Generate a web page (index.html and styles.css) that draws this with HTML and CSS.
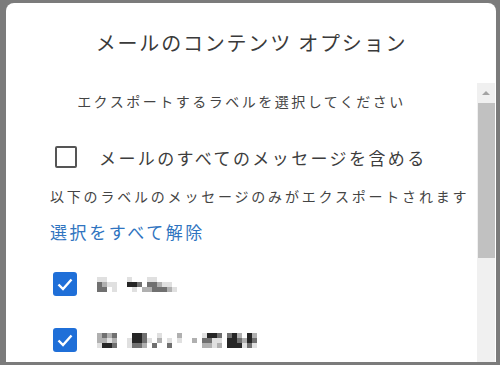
FILE: index.html
```html
<!DOCTYPE html>
<html>
  <head>
    <meta charset="utf-8">
    <link rel="stylesheet" href="styles.css">
  </head>
  <body>
    <div class="dialog">
      <header class="title">メールのコンテンツ オプション</header>
      <div class="main">
        <div class="content">
          <p class="lead">エクスポートするラベルを選択してください</p>
          <label class="option">
            <span class="box"></span>
            <span class="option-text">メールのすべてのメッセージを含める</span>
          </label>
          <p class="note">以下のラベルのメッセージのみがエクスポートされます</p>
          <a class="clear" href="#">選択をすべて解除</a>
          <div class="label-row first">
            <span class="box checked"><svg viewBox="0 0 24 24" width="24" height="24"><polyline points="5.5,12.5 10,17 18.5,7.5" fill="none" stroke="#fff" stroke-width="2.4"/></svg></span>
            <span class="mosaic"><i class="s1"></i><i class="s3"></i><i class="s3"></i><i class="s1"></i><i class="s2"></i><i class="s3"></i><i></i><i class="s1"></i><i></i><i></i><i class="s1"></i><i class="s1"></i><i></i><i></i><i></i><i></i><i></i><i></i><i class="s1"></i><i class="s4"></i><i></i><i></i><i class="s4"></i><i class="s1"></i><i></i><i class="s3"></i><i></i><i></i><i></i><i class="s2"></i><i class="s1"></i><i class="s3"></i><i class="s2"></i><i class="s1"></i><i class="s3"></i><i class="s3"></i><i></i><i class="s2"></i><i class="s3"></i><i></i><i class="s1"></i><i class="s3"></i><i></i><i class="s1"></i><i class="s2"></i><i></i><i></i><i class="s1"></i></span>
          </div>
          <div class="label-row">
            <span class="box checked"><svg viewBox="0 0 24 24" width="24" height="24"><polyline points="5.5,12.5 10,17 18.5,7.5" fill="none" stroke="#fff" stroke-width="2.4"/></svg></span>
            <span class="mosaic"><i class="s2"></i><i class="s2"></i><i class="s1"></i><i class="s3"></i><i class="s2"></i><i class="s4"></i><i class="s2"></i><i class="s1"></i><i class="s4"></i><i class="s3"></i><i class="s2"></i><i class="s3"></i><i></i><i></i><i></i><i></i><i></i><i></i><i></i><i class="s1"></i><i class="s1"></i><i class="s4"></i><i class="s4"></i><i class="s3"></i><i class="s4"></i><i class="s4"></i><i class="s3"></i><i class="s3"></i><i class="s3"></i><i class="s2"></i><i></i><i class="s1"></i><i></i><i></i><i></i><i class="s3"></i><i class="s1"></i><i class="s2"></i><i></i><i></i><i></i><i></i><i></i><i class="s1"></i><i class="s3"></i><i></i><i></i><i></i><i class="s2"></i><i class="s1"></i><i></i><i></i><i></i><i></i><i></i><i></i><i></i><i></i><i class="s2"></i><i></i><i></i><i></i><i></i><i class="s1"></i><i class="s3"></i><i class="s2"></i><i class="s4"></i><i class="s3"></i><i class="s2"></i><i class="s4"></i><i class="s1"></i><i class="s1"></i><i class="s3"></i><i class="s1"></i><i class="s2"></i><i></i><i></i><i></i><i class="s3"></i><i class="s4"></i><i class="s4"></i><i class="s4"></i><i class="s4"></i><i class="s4"></i><i class="s2"></i><i class="s3"></i><i class="s4"></i><i></i><i class="s2"></i><i class="s1"></i><i class="s4"></i><i class="s4"></i><i class="s3"></i><i class="s2"></i><i class="s3"></i><i class="s1"></i></span>
          </div>
        </div>
        <div class="scrollbar">
          <div class="arrow"></div>
          <div class="thumb"></div>
        </div>
      </div>
    </div>
  </body>
</html>
```

FILE: styles.css
```css
html {
  height: 100%;
}
body {
  margin: 0;
  height: 100%;
  padding: 3px 4px 0 6px;
  box-sizing: border-box;
  background-color: #7b7b7b;
  font-family: "Noto Sans CJK JP", sans-serif;
  color: #444;
  overflow: hidden;
}
.dialog {
  width: 490px;
  height: 359px;
  background-color: #fff;
  border-radius: 8px 8px 0 0;
  display: flex;
  flex-flow: column;
}
.title {
  height: 78px;
  flex: none;
  display: flex;
  align-items: center;
  justify-content: center;
  font-size: 20px;
  letter-spacing: 1.8px;
  color: #3a3a3a;
  padding: 0 0 2px 1px;
}
.main {
  flex: 1;
  display: flex;
  min-height: 0;
}
.content {
  flex: 1;
  padding-left: 44px;
  display: flex;
  flex-flow: column;
  align-items: flex-start;
}
.lead {
  align-self: stretch;
  margin: 8px 0 0 -44px;
  text-align: center;
  font-size: 14px;
  letter-spacing: 2.5px;
  line-height: 20px;
}
.option {
  margin-top: 32px;
  height: 28px;
  display: flex;
  align-items: center;
}
.box {
  display: inline-block;
  box-sizing: border-box;
  width: 22px;
  height: 22px;
  border: 2px solid #555;
  border-radius: 2px;
  margin-left: 5px;
}
.box.checked {
  width: 24px;
  height: 24px;
  border: none;
  border-radius: 3px;
  background-color: #1f6fd8;
  margin-left: 3px;
}
.box svg {
  display: block;
}
.option-text {
  margin-left: 22px;
  font-size: 17px;
  letter-spacing: 2.4px;
  color: #3d3d3d;
}
.note {
  margin: 15px 0 0;
  font-size: 14px;
  letter-spacing: 2.8px;
  line-height: 20px;
}
.clear {
  margin-top: 15px;
  font-size: 17px;
  letter-spacing: 2.6px;
  line-height: 22px;
  color: #2f74c0;
  text-decoration: none;
}
.label-row {
  margin-top: 32px;
  display: flex;
  align-items: center;
}
.label-row.first {
  margin-top: 29px;
}
.mosaic {
  margin-left: 20px;
  display: grid;
  grid-auto-flow: column;
  grid-template-rows: repeat(3, 5px);
  grid-auto-columns: 5px;
}
.mosaic i {
  display: block;
}
.mosaic .s1 { background-color: #e0e0e0; }
.mosaic .s2 { background-color: #b0b0b0; }
.mosaic .s3 { background-color: #707070; }
.mosaic .s4 { background-color: #262626; }
.scrollbar {
  width: 18px;
  margin-right: 1px;
  background-color: #f0f0f0;
  display: flex;
  flex-flow: column;
  align-items: center;
}
.arrow {
  height: 20px;
  width: 100%;
  display: flex;
  align-items: center;
  justify-content: center;
}
.arrow::before {
  content: "";
  border-left: 4px solid transparent;
  border-right: 4px solid transparent;
  border-bottom: 4px solid #a3a3a3;
}
.thumb {
  width: 17px;
  height: 155px;
  background-color: #c1c1c1;
}
```
